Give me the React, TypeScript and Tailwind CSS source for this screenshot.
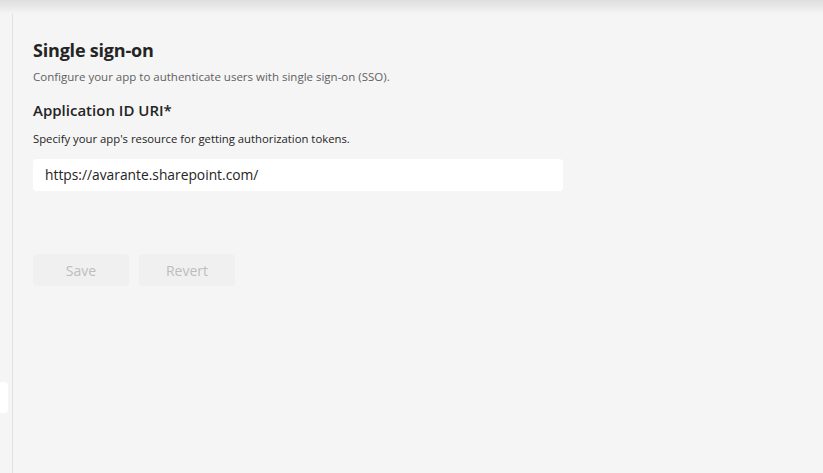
import React from "react";

export default function App() {
  return (
    <div
      className="relative w-[823px] h-[473px] bg-[#f5f5f5] overflow-hidden"
      style={{ fontFamily: '"Open Sans", "Noto Sans", sans-serif' }}
    >
      <div className="absolute top-0 left-0 right-0 h-[14px] bg-gradient-to-b from-[#dedede] to-[#f5f5f5]" />
      <div className="absolute left-0 top-[382px] w-[8px] h-[31px] bg-white rounded-r-[4px]" />
      <div className="flex h-full pt-[8px]">
        <div className="w-[12px] shrink-0" />
        <div className="w-px bg-[#e0e0e0] shrink-0" />
        <div className="flex flex-col pl-[20px] pt-[30px]">
          <h1 className="text-[18px] leading-[24px] font-bold text-[#242424] tracking-[-0.2px]">Single sign-on</h1>
          <p className="mt-[7px] text-[11.5px] leading-[16px] text-[#616161]">
            Configure your app to authenticate users with single sign-on (SSO).
          </p>
          <h2 className="mt-[15px] text-[15px] leading-[20px] font-semibold text-[#242424]">Application ID URI*</h2>
          <p className="mt-[11px] text-[11.3px] leading-[16px] text-[#242424]">
            Specify your app's resource for getting authorization tokens.
          </p>
          <div className="mt-[12px] w-[530px] h-[32px] bg-white rounded-[4px] flex items-center px-[12px] text-[13.8px] text-[#242424]">
            https://avarante.sharepoint.com/
          </div>
          <div className="mt-[63px] flex gap-[10px]">
            <button className="w-[96px] h-[32px] rounded-[4px] bg-[#f0f0f0] text-[14px] text-[#bdbdbd]">Save</button>
            <button className="w-[96px] h-[32px] rounded-[4px] bg-[#f0f0f0] text-[14px] text-[#bdbdbd]">Revert</button>
          </div>
        </div>
      </div>
    </div>
  );
}
